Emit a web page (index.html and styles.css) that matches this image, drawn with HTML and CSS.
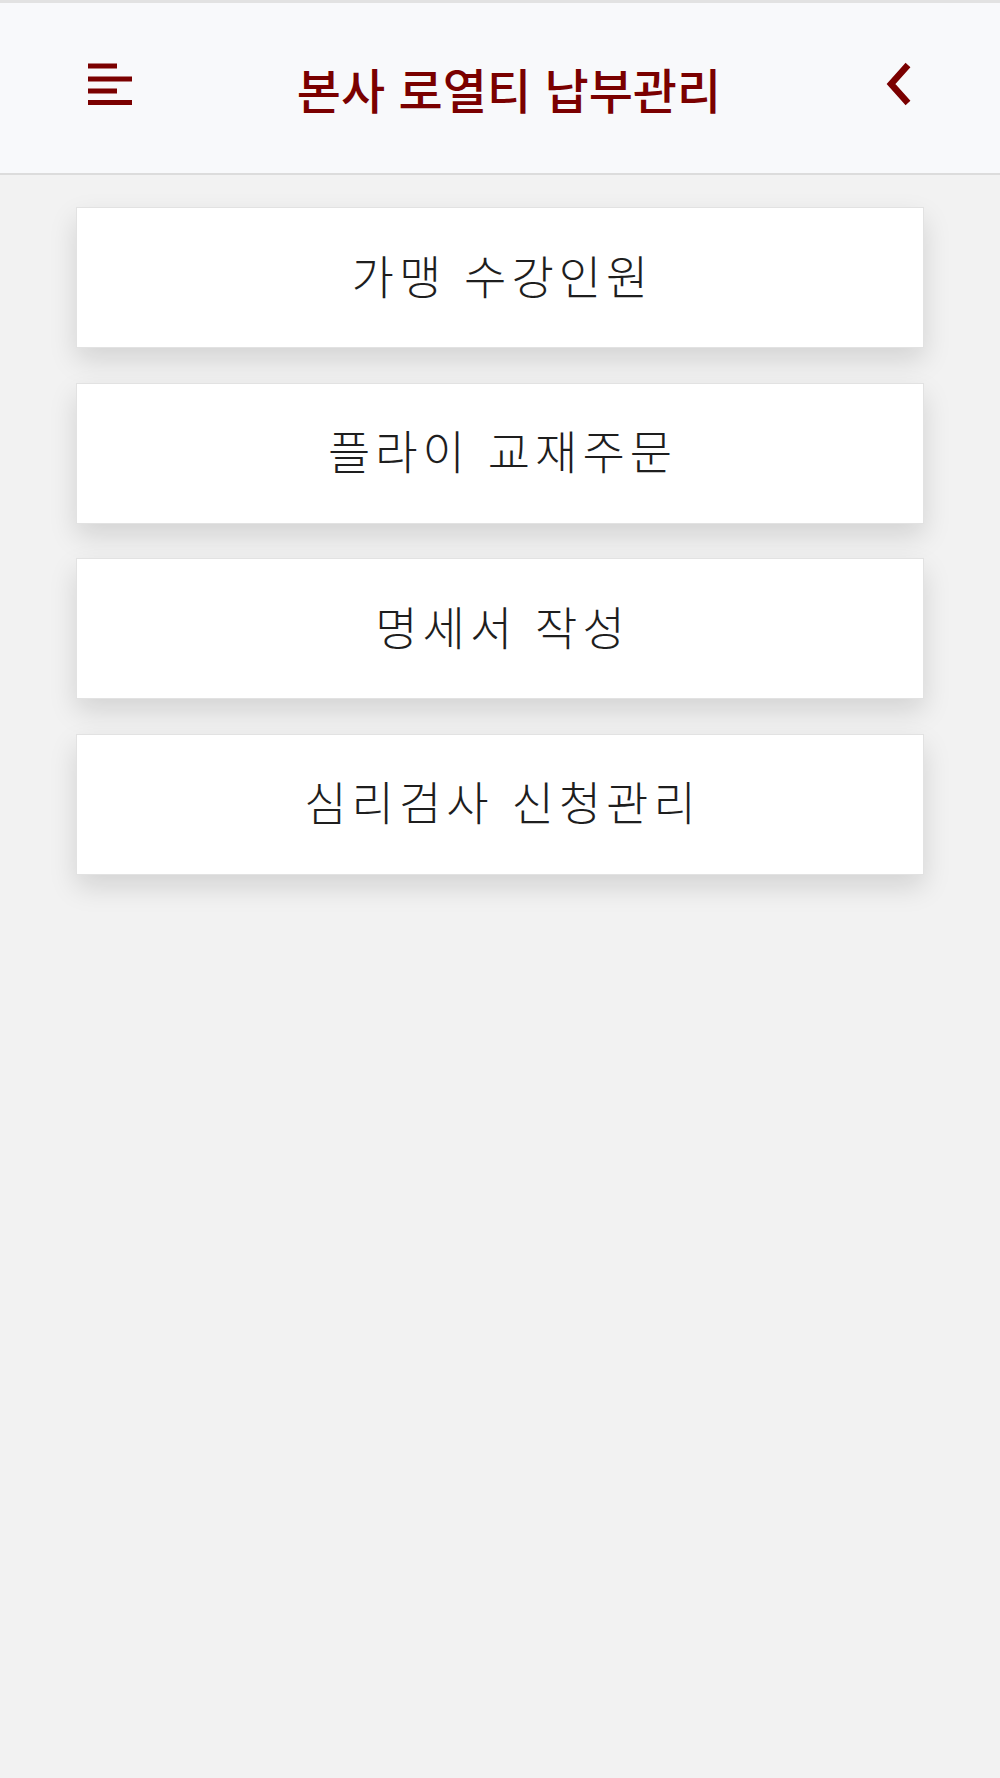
FILE: index.html
```html
<!DOCTYPE html>
<html lang="ko">
<head>
<meta charset="utf-8">
<title>본사 로열티 납부관리</title>
<link rel="stylesheet" href="styles.css">
</head>
<body>
<header class="topbar">
  <button class="icon-btn menu-btn" aria-label="메뉴">
    <svg width="44" height="42" viewBox="0 0 44 42">
      <rect x="0" y="0.5" width="29" height="5" fill="currentColor"/>
      <rect x="0" y="13.5" width="44" height="5" fill="currentColor"/>
      <rect x="0" y="25.5" width="29" height="5" fill="currentColor"/>
      <rect x="0" y="37" width="44" height="5" fill="currentColor"/>
    </svg>
  </button>
  <h1 class="title">본사 로열티 납부관리</h1>
  <button class="icon-btn back-btn" aria-label="뒤로">
    <svg width="26" height="44" viewBox="0 0 26 44">
      <polyline points="22,3 5,22 22,41" fill="none" stroke="currentColor" stroke-width="6.5" stroke-linejoin="miter"/>
    </svg>
  </button>
</header>
<main class="menu-list">
  <a class="menu-card" href="#">가맹 수강인원</a>
  <a class="menu-card" href="#">플라이 교재주문</a>
  <a class="menu-card" href="#">명세서 작성</a>
  <a class="menu-card" href="#">심리검사 신청관리</a>
</main>
</body>
</html>
```
FILE: styles.css
```css
html, body {
  margin: 0;
  padding: 0;
}
body {
  background: #f2f2f2;
  min-height: 1778px;
  font-family: "Noto Sans CJK KR", "Noto Sans", sans-serif;
}
.topbar {
  box-sizing: border-box;
  height: 175px;
  border-top: 3px solid #e2e2e2;
  border-bottom: 2px solid #dcdcdc;
  background: #f8f9fb;
  display: flex;
  align-items: center;
  justify-content: space-between;
  padding: 0 88px 8px 88px;
  color: #7a0000;
}
.icon-btn {
  background: none;
  border: 0;
  padding: 0;
  margin: 0;
  color: #7a0000;
  display: flex;
  align-items: center;
}
.title {
  margin: 0;
  font-size: 48px;
  font-weight: 500;
  color: #7a0000;
  line-height: 1;
  padding-top: 8px;
}
.menu-list {
  display: flex;
  flex-direction: column;
  gap: 34.5px;
  padding: 32px 76px;
}
.menu-card {
  box-sizing: border-box;
  height: 141px;
  background: #ffffff;
  border: 1px solid #e2e2e2;
  box-shadow: 0 12px 26px rgba(0, 0, 0, 0.13);
  display: flex;
  align-items: center;
  justify-content: center;
  font-size: 46px;
  font-weight: 300;
  letter-spacing: 5px;
  color: #1e1e1e;
  text-decoration: none;
  padding-bottom: 8px;
  padding-left: 5px;
}
```
